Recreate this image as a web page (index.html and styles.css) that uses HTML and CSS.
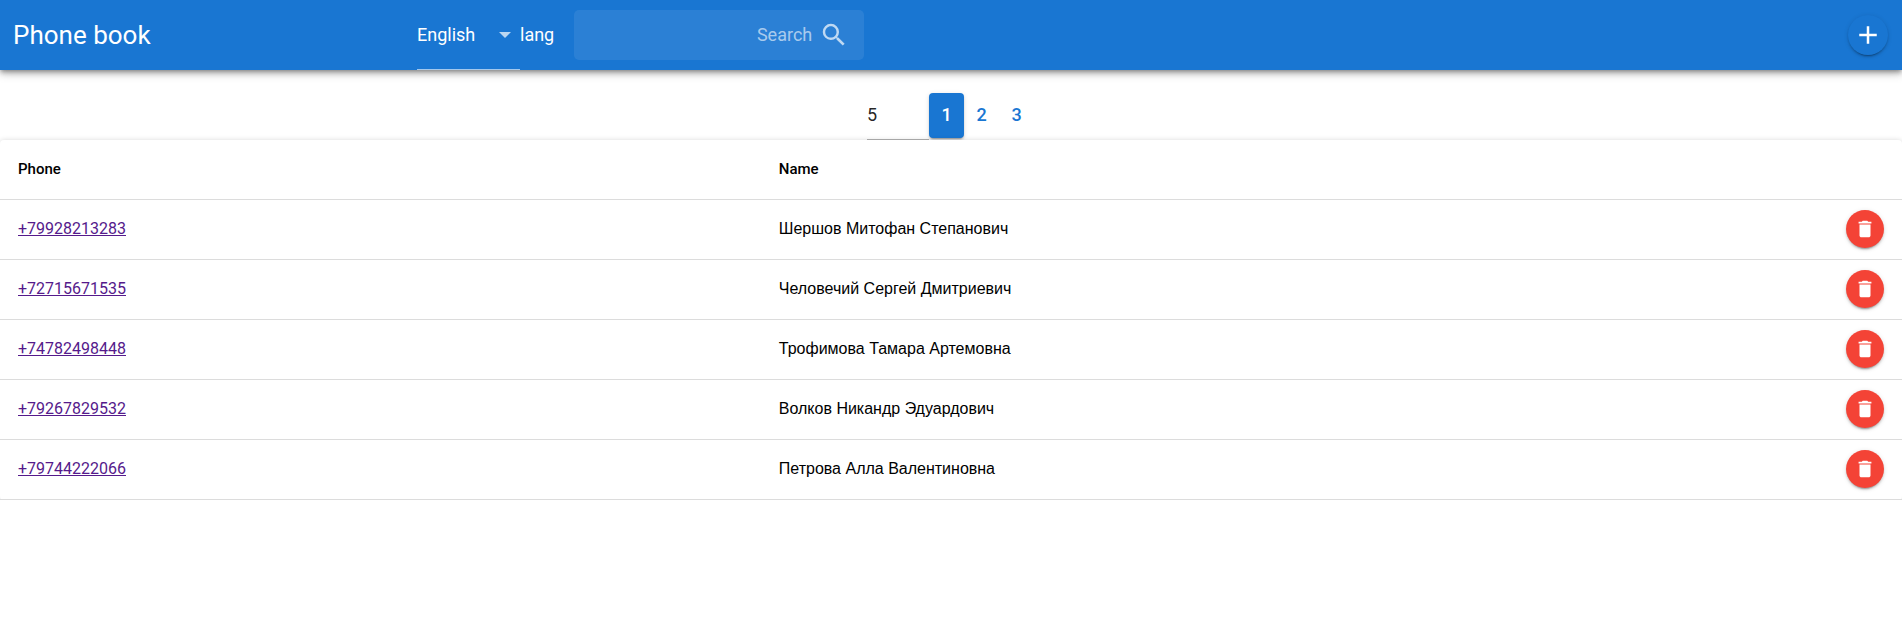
FILE: index.html
```
<!DOCTYPE html>
<html lang="en">
<head>
<meta charset="utf-8">
<title>Phone book</title>
<link rel="stylesheet" href="styles.css">
</head>
<body>
<svg class="sprite" aria-hidden="true">
  <symbol id="icon-delete" viewBox="0 0 24 24"><path d="M6 19c0 1.1.9 2 2 2h8c1.1 0 2-.9 2-2V7H6v12zM19 4h-3.5l-1-1h-5l-1 1H5v2h14V4z"/></symbol>
</svg>
<header class="app-bar">
  <h1 class="title">Phone book</h1>
  <div class="language">
    <div class="select select-light">
      <select id="language">
        <option>English</option>
        <option>Русский</option>
      </select>
      <svg class="arrow" viewBox="0 0 12 6" aria-hidden="true"><path d="M0 0h12L6 6z"/></svg>
    </div>
    <label for="language">lang</label>
  </div>
  <div class="search">
    <input type="text" placeholder="Search" aria-label="Search">
    <svg class="icon-large" viewBox="0 0 24 24" aria-hidden="true"><path d="M15.5 14h-.79l-.28-.27A6.471 6.471 0 0 0 16 9.5 6.5 6.5 0 1 0 9.5 16c1.61 0 3.09-.59 4.23-1.57l.27.28v.79l5 4.99L20.49 19l-4.99-5zm-6 0C7.01 14 5 11.99 5 9.5S7.01 5 9.5 5 14 7.01 14 9.5 11.99 14 9.5 14z"/></svg>
  </div>
  <button class="add" type="button" aria-label="Add contact">
    <svg class="icon-large" viewBox="0 0 24 24" aria-hidden="true"><path d="M19 13h-6v6h-2v-6H5v-2h6V5h2v6h6v2z"/></svg>
  </button>
</header>
<main>
  <nav class="pager" aria-label="Pages">
    <div class="select">
      <select class="page-size" aria-label="Rows per page">
        <option>5</option>
        <option>10</option>
      </select>
    </div>
    <button class="page page-current" type="button" aria-current="page">1</button>
    <button class="page" type="button">2</button>
    <button class="page" type="button">3</button>
  </nav>
  <div class="card">
    <table class="contacts">
      <thead>
        <tr><th class="phone">Phone</th><th>Name</th><th class="actions"></th></tr>
      </thead>
      <tbody>
        <tr><td><a href="tel:+79928213283">+79928213283</a></td><td>Шершов Митофан Степанович</td><td class="actions"><button class="delete" type="button" aria-label="Delete"><svg class="icon"><use href="#icon-delete"/></svg></button></td></tr>
        <tr><td><a href="tel:+72715671535">+72715671535</a></td><td>Человечий Сергей Дмитриевич</td><td class="actions"><button class="delete" type="button" aria-label="Delete"><svg class="icon"><use href="#icon-delete"/></svg></button></td></tr>
        <tr><td><a href="tel:+74782498448">+74782498448</a></td><td>Трофимова Тамара Артемовна</td><td class="actions"><button class="delete" type="button" aria-label="Delete"><svg class="icon"><use href="#icon-delete"/></svg></button></td></tr>
        <tr><td><a href="tel:+79267829532">+79267829532</a></td><td>Волков Никандр Эдуардович</td><td class="actions"><button class="delete" type="button" aria-label="Delete"><svg class="icon"><use href="#icon-delete"/></svg></button></td></tr>
        <tr><td><a href="tel:+79744222066">+79744222066</a></td><td>Петрова Алла Валентиновна</td><td class="actions"><button class="delete" type="button" aria-label="Delete"><svg class="icon"><use href="#icon-delete"/></svg></button></td></tr>
      </tbody>
    </table>
  </div>
</main>
</body>
</html>
```

FILE: styles.css
```
* {
  box-sizing: border-box;
}

body {
  margin: 0;
  background: #fff;
  color: rgba(0, 0, 0, 0.87);
  font: 18px/24px Roboto, "Liberation Sans", sans-serif;
}

button,
input,
select {
  margin: 0;
  padding: 0;
  border: 0;
  outline: 0;
  background: none;
  color: inherit;
  font: inherit;
}

button {
  cursor: pointer;
}

svg {
  display: block;
  flex: none;
  fill: currentColor;
}

.sprite {
  position: absolute;
  width: 0;
  height: 0;
}

.icon {
  width: 22px;
  height: 22px;
}

.icon-large {
  width: 30px;
  height: 30px;
}

.app-bar {
  position: relative;
  display: flex;
  align-items: center;
  height: 70px;
  padding: 0 14px 0 13px;
  background: #1976d2;
  color: #fff;
  box-shadow: 0 2px 4px -1px rgba(0, 0, 0, 0.3), 0 4px 5px 0 rgba(0, 0, 0, 0.14), 0 3px 10px 0 rgba(0, 0, 0, 0.2);
}

.title {
  width: 404px;
  margin: 0;
  font-size: 26px;
  line-height: 32px;
  font-weight: 400;
}

.language {
  display: flex;
  align-items: center;
  align-self: stretch;
}

.select {
  display: grid;
  align-items: center;
  align-self: stretch;
  border-bottom: 1px solid #b3b3b3;
}

.select > * {
  grid-area: 1 / 1;
}

.select select {
  align-self: stretch;
  width: 103px;
  appearance: none;
}

.select .page-size {
  width: 62px;
  padding-bottom: 2px;
}

.select-light {
  border-color: #a3c8ed;
}

.select option {
  color: #212121;
}

.arrow {
  width: 12px;
  height: 6px;
  margin-right: 9px;
  justify-self: end;
  opacity: 0.7;
  pointer-events: none;
}

.search {
  display: flex;
  align-items: center;
  gap: 7px;
  width: 290px;
  height: 50px;
  margin-left: 20px;
  padding-right: 15px;
  border-radius: 5px;
  background: rgba(255, 255, 255, 0.08);
  color: rgba(255, 255, 255, 0.7);
}

.search input {
  flex: 1;
  min-width: 0;
  height: 100%;
  padding-bottom: 2px;
  text-align: right;
}

.search input::placeholder {
  color: rgba(255, 255, 255, 0.6);
  opacity: 1;
}

.add {
  display: grid;
  place-items: center;
  width: 40px;
  height: 40px;
  margin-left: auto;
  border-radius: 50%;
  background: #1976d2;
  box-shadow: 0 3px 1px -2px rgba(0, 0, 0, 0.2), 0 2px 2px 0 rgba(0, 0, 0, 0.14), 0 1px 5px 0 rgba(0, 0, 0, 0.12);
}

.pager {
  display: flex;
  justify-content: center;
  height: 70px;
  padding: 23px 1px 0 0;
}

.page {
  width: 35px;
  height: 45px;
  padding-bottom: 2px;
  border-radius: 4px;
  color: #1976d2;
  font-weight: 500;
}

.page-current {
  background: #1976d2;
  color: #fff;
  box-shadow: 0 3px 1px -2px rgba(0, 0, 0, 0.2), 0 2px 2px 0 rgba(0, 0, 0, 0.14), 0 1px 5px 0 rgba(0, 0, 0, 0.12);
}

.card {
  position: relative;
  border-radius: 4px;
  background: #fff;
  box-shadow: 0 0 5px rgba(0, 0, 0, 0.15);
  clip-path: inset(-8px 0 0 0);
}

.contacts {
  width: 100%;
  border-collapse: separate;
  border-spacing: 0;
  color: #000;
  font-size: 16px;
  line-height: 24px;
}

.contacts th,
.contacts td {
  height: 60px;
  padding: 0 18px 1px;
  border-bottom: 1px solid #dcdcdc;
  text-align: left;
}

.contacts th {
  font-size: 15px;
  font-weight: 500;
}

.contacts td:nth-child(2) {
  font-family: "Liberation Sans", Arial, sans-serif;
}

.contacts .phone {
  width: 40%;
}

.contacts .actions {
  width: 74px;
}

.contacts a {
  color: #551a8b;
}

.delete {
  display: grid;
  place-items: center;
  width: 38px;
  height: 38px;
  border-radius: 50%;
  background: #f44336;
  color: #fff;
  box-shadow: 0 3px 1px -2px rgba(0, 0, 0, 0.2), 0 2px 2px 0 rgba(0, 0, 0, 0.14), 0 1px 5px 0 rgba(0, 0, 0, 0.12);
}
```
